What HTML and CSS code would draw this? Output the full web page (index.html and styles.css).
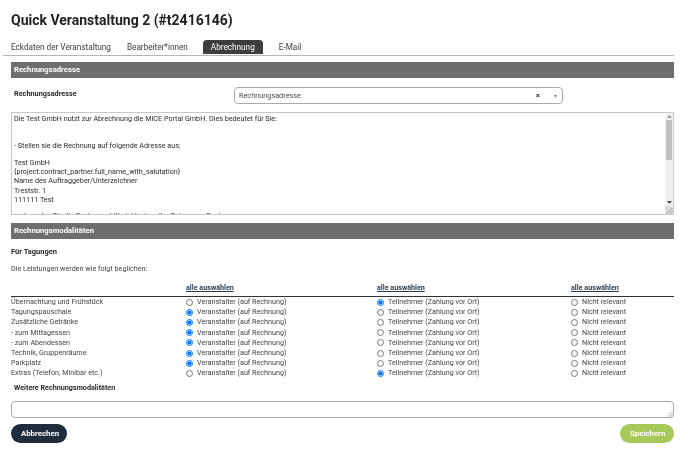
FILE: index.html
```html
<!DOCTYPE html>
<html lang="de">
<head>
<meta charset="utf-8">
<title>Quick Veranstaltung 2</title>
<link rel="stylesheet" href="styles.css">
</head>
<body>
<div class="page">
  <h1 class="title">Quick Veranstaltung 2 (#t2416146)</h1>
  <nav class="tabs">
    <span class="tab">Eckdaten der Veranstaltung</span>
    <span class="tab">Bearbeiter*innen</span>
    <span class="tab active">Abrechnung</span>
    <span class="tab">E-Mail</span>
  </nav>

  <div class="bar">Rechnungsadresse</div>

  <div class="addr-row">
    <span class="addr-label">Rechnungsadresse</span>
    <div class="select">
      <span class="ph">Rechnungsadresse</span>
      <span class="clear">×</span>
      <span class="caret">▾</span>
    </div>
  </div>

  <div class="textbox">
    <div class="textbox-content">
      <p class="tl">Die Test GmbH nutzt zur Abrechnung die MICE Portal GmbH. Dies bedeutet für Sie:</p>
      <p class="tl gap2">- Stellen sie die Rechnung auf folgende Adresse aus:</p>
      <p class="tl gap1">Test GmbH</p>
      <p class="tl">{project.contract_partner.full_name_with_salutation}</p>
      <p class="tl">Name des Auftraggeber/Unterzeichner</p>
      <p class="tl">Treststr. 1</p>
      <p class="tl">111111 Test</p>
      <p class="tl gap3">und senden Sie die Rechnung bitte inklusive aller Belege per Post an:</p>
    </div>
    <div class="scrollbar">
      <span class="sb-btn"><svg width="5" height="3" viewBox="0 0 5 3"><path d="M0 3 L2.5 0 L5 3 Z" fill="#9a9a9a"/></svg></span>
      <span class="sb-thumb"></span>
      <span class="sb-track"></span>
      <span class="sb-btn"><svg width="5" height="3" viewBox="0 0 5 3"><path d="M0 0 L2.5 3 L5 0 Z" fill="#505050"/></svg></span>
      <span class="sb-corner"><svg width="7" height="7" viewBox="0 0 7 7"><path d="M6.5 1 L1 6.5 M6.5 4 L4 6.5" stroke="#9a9a9a" stroke-width="0.8"/></svg></span>
    </div>
  </div>

  <div class="bar bar2">Rechnungsmodalitäten</div>

  <h2 class="sub">Für Tagungen</h2>
  <p class="intro">Die Leistungen werden wie folgt beglichen:</p>

  <div class="grid head">
    <span></span>
    <a class="all">alle auswählen</a>
    <a class="all">alle auswählen</a>
    <a class="all">alle auswählen</a>
  </div>

  <div class="grid rows">
    <span class="lbl">Übernachtung und Frühstück</span>
    <label class="opt"><input type="radio" name="r1"> Veranstalter (auf Rechnung)</label>
    <label class="opt"><input type="radio" name="r1" checked> Teilnehmer (Zahlung vor Ort)</label>
    <label class="opt"><input type="radio" name="r1"> Nicht relevant</label>

    <span class="lbl">Tagungspauschale</span>
    <label class="opt"><input type="radio" name="r2" checked> Veranstalter (auf Rechnung)</label>
    <label class="opt"><input type="radio" name="r2"> Teilnehmer (Zahlung vor Ort)</label>
    <label class="opt"><input type="radio" name="r2"> Nicht relevant</label>

    <span class="lbl">Zusätzliche Getränke</span>
    <label class="opt"><input type="radio" name="r3" checked> Veranstalter (auf Rechnung)</label>
    <label class="opt"><input type="radio" name="r3"> Teilnehmer (Zahlung vor Ort)</label>
    <label class="opt"><input type="radio" name="r3"> Nicht relevant</label>

    <span class="lbl">- zum Mittagessen</span>
    <label class="opt"><input type="radio" name="r4" checked> Veranstalter (auf Rechnung)</label>
    <label class="opt"><input type="radio" name="r4"> Teilnehmer (Zahlung vor Ort)</label>
    <label class="opt"><input type="radio" name="r4"> Nicht relevant</label>

    <span class="lbl">- zum Abendessen</span>
    <label class="opt"><input type="radio" name="r5" checked> Veranstalter (auf Rechnung)</label>
    <label class="opt"><input type="radio" name="r5"> Teilnehmer (Zahlung vor Ort)</label>
    <label class="opt"><input type="radio" name="r5"> Nicht relevant</label>

    <span class="lbl">Technik, Gruppenräume</span>
    <label class="opt"><input type="radio" name="r6" checked> Veranstalter (auf Rechnung)</label>
    <label class="opt"><input type="radio" name="r6"> Teilnehmer (Zahlung vor Ort)</label>
    <label class="opt"><input type="radio" name="r6"> Nicht relevant</label>

    <span class="lbl">Parkplatz</span>
    <label class="opt"><input type="radio" name="r7" checked> Veranstalter (auf Rechnung)</label>
    <label class="opt"><input type="radio" name="r7"> Teilnehmer (Zahlung vor Ort)</label>
    <label class="opt"><input type="radio" name="r7"> Nicht relevant</label>

    <span class="lbl">Extras (Telefon, Minibar etc.)</span>
    <label class="opt"><input type="radio" name="r8"> Veranstalter (auf Rechnung)</label>
    <label class="opt"><input type="radio" name="r8" checked> Teilnehmer (Zahlung vor Ort)</label>
    <label class="opt"><input type="radio" name="r8"> Nicht relevant</label>
  </div>

  <h3 class="more">Weitere Rechnungsmodalitäten</h3>
  <div class="smallbox">
    <span class="sb-corner2"><svg width="6" height="6" viewBox="0 0 6 6"><path d="M5.5 1 L1 5.5 M5.5 3.5 L3.5 5.5" stroke="#9a9a9a" stroke-width="0.8"/></svg></span>
  </div>

  <div class="actions">
    <button class="btn cancel">Abbrechen</button>
    <button class="btn save">Speichern</button>
  </div>
</div>
</body>
</html>
```

FILE: styles.css
```css
* { box-sizing: border-box; }

body {
  margin: 0;
  background: #ffffff;
  font-family: Roboto, "Liberation Sans", Arial, sans-serif;
  color: #3c3c3c;
}

.page {
  width: 663px;
  margin-left: 11px;
  padding-top: 11px;
  will-change: transform;
}

.title {
  margin: 0;
  font-size: 14px;
  line-height: 18px;
  font-weight: 700;
  color: #222;
}

.tabs {
  display: flex;
  margin: 11px 0 0 -8px;
  border-bottom: 1px solid #b5b5b5;
  padding-bottom: 1px;
}

.tab {
  padding: 0 8px;
  height: 14px;
  line-height: 14px;
  font-size: 8.2px;
  color: #3c3c3c;
  border-radius: 4px 4px 0 0;
}

.tab.active {
  background: #3d3d3d;
  color: #fff;
  margin: 0 8px 0 7px;
}

.bar {
  margin-top: 6px;
  height: 16px;
  line-height: 16px;
  background: #6e6e6e;
  color: #fff;
  font-size: 7.7px;
  font-weight: 700;
  padding-left: 3px;
}

.bar2 { margin-top: 8px; }

.addr-row {
  display: flex;
  align-items: flex-start;
  margin-top: 10px;
}

.addr-label {
  width: 223px;
  padding-left: 3px;
  padding-top: 1px;
  font-size: 7.3px;
  font-weight: 700;
  color: #2a2a2a;
}

.select {
  width: 329px;
  height: 17px;
  margin-top: -1px;
  border: 1px solid #aaa;
  border-radius: 4px;
  display: flex;
  align-items: center;
  padding: 0 5px 0 4px;
  font-size: 7.3px;
}

.ph { flex: 1; color: #4a4a4a; }

.clear {
  font-size: 8px;
  font-weight: 700;
  color: #333;
  margin-right: 14px;
}

.caret {
  font-size: 6px;
  color: #888;
}

.textbox {
  margin-top: 8px;
  height: 103px;
  border: 1px solid #c8c8c8;
  display: flex;
  overflow: hidden;
}

.textbox-content {
  flex: 1;
  padding: 1px 2px;
  font-size: 7.2px;
  color: #2a2a2a;
  overflow: hidden;
}

.tl {
  margin: 0;
  line-height: 9.2px;
  white-space: nowrap;
}

.tl.gap1 { margin-top: 8px; }
.tl.gap2 { margin-top: 17.6px; }
.tl.gap3 { margin-top: 7px; }

.scrollbar {
  width: 8px;
  background: #f1f1f1;
  display: flex;
  flex-direction: column;
  align-items: center;
}

.sb-btn {
  height: 7px;
  display: flex;
  align-items: center;
  justify-content: center;
}

.sb-thumb {
  width: 6px;
  height: 40px;
  background: #c1c1c1;
}

.sb-track { flex: 1; }

.sb-corner {
  width: 8px;
  height: 8px;
  background: #dcdcdc;
  display: flex;
  align-items: flex-end;
  justify-content: flex-end;
}

.sub {
  margin: 8px 0 0 0;
  font-size: 7.5px;
  font-weight: 700;
  color: #2a2a2a;
  line-height: 10px;
}

.intro {
  margin: 7px 0 0 0;
  font-size: 7.2px;
  line-height: 10px;
  color: #444;
}

.grid {
  display: grid;
  grid-template-columns: 175px 191px 194px 1fr;
}

.head {
  margin-top: 9px;
  border-bottom: 1px solid #333;
  padding-bottom: 3px;
}

.all {
  font-size: 7.2px;
  font-weight: 700;
  color: #2f3e4e;
  text-decoration: underline;
  line-height: 10px;
}

.rows {
  margin-top: 0;
  font-size: 7.2px;
  color: #444;
  grid-auto-rows: 10.2px;
}

.lbl, .opt {
  height: 10.2px;
  line-height: 10.2px;
  white-space: nowrap;
}

.opt {
  display: flex;
  align-items: center;
  gap: 4px;
}

.opt input {
  margin: 0;
  width: 7px;
  height: 7px;
}

.more {
  margin: 4px 0 0 3px;
  font-size: 7.2px;
  font-weight: 700;
  color: #2a2a2a;
  line-height: 10px;
}

.smallbox {
  margin-top: 8px;
  height: 17px;
  border: 1px solid #aaa;
  border-radius: 4px;
  display: flex;
  align-items: flex-end;
  justify-content: flex-end;
}

.sb-corner2 { display: flex; }

.actions {
  display: flex;
  justify-content: space-between;
  margin-top: 6px;
}

.btn {
  border: none;
  height: 19px;
  border-radius: 10px;
  padding: 0 10px;
  font-family: Roboto, "Liberation Sans", Arial, sans-serif;
  font-size: 7.8px;
  font-weight: 700;
  color: #fff;
}

.cancel { background: #1f2c3b; width: 56px; }
.save { background: #a6c95a; width: 54px; }
```
